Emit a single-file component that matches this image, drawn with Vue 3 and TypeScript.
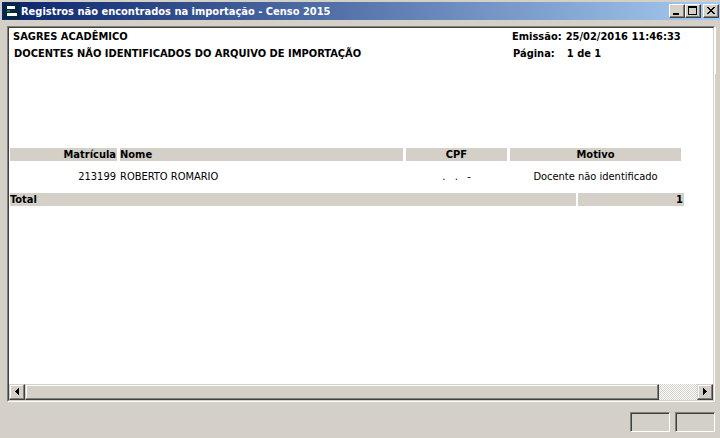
<script setup lang="ts">
interface Teacher {
  id: number
  name: string
  cpf: string
  reason: string
}

const title = 'Registros não encontrados na importação - Censo 2015'
const teachers: Teacher[] = [
  { id: 213199, name: 'ROBERTO ROMARIO', cpf: '.   .   -', reason: 'Docente não identificado' },
]
</script>

<template>
  <div class="window">
    <header class="titlebar">
      <svg class="logo" viewBox="0 0 16 16" shape-rendering="crispEdges" aria-hidden="true">
        <rect width="16" height="16" fill="#06273f" />
        <path d="M3 3h8v3H3zM3 10h10v3H3z" fill="#fff" />
        <path d="M3 7h3v2H3z" fill="#188a1c" />
      </svg>
      <h1 class="title">{{ title }}</h1>
      <div class="controls">
        <button type="button" class="raised control" aria-label="Minimizar">
          <svg viewBox="0 0 12 10" shape-rendering="crispEdges"><path d="M2 7h6v2H2z" /></svg>
        </button>
        <button type="button" class="raised control" aria-label="Maximizar">
          <svg viewBox="0 0 12 10" shape-rendering="crispEdges">
            <path fill-rule="evenodd" d="M1 0h9v9H1zM2 2v6h7V2z" />
          </svg>
        </button>
        <button type="button" class="raised control close" aria-label="Fechar">
          <svg viewBox="0 0 12 10" shape-rendering="crispEdges">
            <path d="M2 1h2v1h1v1h2V2h1V1h2v1H9v1H8v1H7v1h1v1h1v1h1v1H8V7H7V6H5v1H4v1H2V7h1V6h1V5h1V4H4V3H3V2H2z" />
          </svg>
        </button>
      </div>
    </header>

    <main class="frame">
      <section class="report">
        <div class="heading">
          <div class="names">
            <p class="system">SAGRES ACADÊMICO</p>
            <h2 class="subject">DOCENTES NÃO IDENTIFICADOS DO ARQUIVO DE IMPORTAÇÃO</h2>
          </div>
          <dl class="meta">
            <div><dt>Emissão:</dt><dd>25/02/2016 11:46:33</dd></div>
            <div class="page"><dt>Página:</dt><dd>1 de 1</dd></div>
          </dl>
        </div>

        <table class="grid">
          <thead>
            <tr>
              <th class="end">Matrícula</th>
              <th class="start">Nome</th>
              <th>CPF</th>
              <th>Motivo</th>
            </tr>
          </thead>
          <tbody>
            <tr v-for="t in teachers" :key="t.id">
              <td class="end">{{ t.id }}</td>
              <td>{{ t.name }}</td>
              <td class="center cpf">{{ t.cpf }}</td>
              <td class="center">{{ t.reason }}</td>
            </tr>
          </tbody>
          <tfoot>
            <tr>
              <th class="start">Total</th>
              <td class="end">{{ teachers.length }}</td>
            </tr>
          </tfoot>
        </table>
      </section>

      <div class="scrollbar">
        <button type="button" class="raised arrow" aria-label="Rolar para a esquerda">
          <svg viewBox="0 0 12 12" shape-rendering="crispEdges"><path d="M4 5h1V4h1V3h1V2h1v7H7V8H6V7H5V6H4z" /></svg>
        </button>
        <div class="raised thumb"></div>
        <div class="track"></div>
        <button type="button" class="raised arrow" aria-label="Rolar para a direita">
          <svg viewBox="0 0 12 12" shape-rendering="crispEdges"><path d="M4 2h1v1h1v1h1v1h1v1H7v1H6v1H5v1H4z" /></svg>
        </button>
      </div>
    </main>

    <footer class="status">
      <div class="panel"></div>
      <div class="panel"></div>
    </footer>
  </div>
</template>

<style>
body {
  background: #d4d0c8;
}
</style>

<style scoped>
* {
  box-sizing: border-box;
}

.window {
  display: flex;
  flex-direction: column;
  min-height: 100vh;
  padding: 2px 0 6px 2px;
  background: #d4d0c8;
  color: #000;
  font-family: "DejaVu Sans Condensed", "DejaVu Sans", sans-serif;
  font-size: 11px;
  line-height: 13px;
}

h1,
h2,
p,
dl,
dd {
  margin: 0;
  font-size: 11px;
}

.titlebar {
  display: flex;
  align-items: center;
  height: 18px;
  padding: 0 1px 0 2px;
  background: linear-gradient(90deg, #0a246a, #a6caf0);
}

.logo {
  width: 16px;
  height: 16px;
}

.title {
  flex: 1;
  padding-left: 1px;
  color: #fff;
  font-weight: bold;
  white-space: nowrap;
}

.controls {
  display: flex;
}

.raised {
  padding: 0;
  border: 1px solid;
  border-color: #fff #404040 #404040 #fff;
  background: #d4d0c8;
  box-shadow: inset -1px -1px #808080;
}

.control {
  display: grid;
  place-items: center;
  width: 16px;
  height: 14px;
}

.control svg {
  width: 12px;
  height: 10px;
}

.close {
  margin-left: 2px;
}

.frame {
  position: relative;
  display: flex;
  flex: 1;
  flex-direction: column;
  margin: 6px 5px 0;
  border: 1px solid;
  border-color: #808080 #fff #fff #808080;
  background: #fff;
}

/* Highlight along the upper part of the right edge */
.frame::after {
  content: "";
  position: absolute;
  top: 0;
  right: -2px;
  width: 1px;
  height: 47px;
  background: #fff;
}

.report {
  flex: 1;
  padding: 2px 1px 0;
  border: solid #404040;
  border-width: 1px 0 0 1px;
  border-right: 1px solid #d4d0c8;
}

.heading {
  display: flex;
  justify-content: space-between;
  min-height: 118px;
  padding: 0 26px 0 3px;
  font-weight: bold;
  white-space: nowrap;
}

.names,
.meta {
  display: flex;
  flex-direction: column;
  gap: 4px;
}

.subject {
  padding-left: 1px;
}

.meta {
  width: 174px;
}

.meta div {
  display: flex;
  gap: 4px;
}

.meta .page {
  gap: 12px;
  padding-left: 1px;
}

.grid {
  display: block;
  width: 674px;
}

thead,
tbody,
tfoot {
  display: block;
}

tr {
  display: grid;
  grid-template-columns: 107px 283px 101px 171px;
  gap: 3px;
}

tbody tr {
  padding: 9px 0 10px;
}

tfoot tr {
  grid-template-columns: 1fr 106px;
  gap: 2px;
  font-weight: bold;
}

th,
td {
  padding: 0;
}

thead th,
tfoot th,
tfoot td {
  background: #d4d0c8;
}

.start {
  text-align: left;
}

.end {
  padding-right: 1px;
  text-align: right;
}

.center {
  text-align: center;
}

.cpf {
  white-space: pre;
}

.scrollbar {
  display: flex;
  height: 17px;
  border: solid #d4d0c8;
  border-width: 0 1px 1px 0;
  border-left: 1px solid #404040;
}

.scrollbar .raised {
  border-color: #d4d0c8 #404040 #404040 #d4d0c8;
  box-shadow: inset -1px -1px #808080, inset 1px 1px #fff;
}

.arrow {
  display: grid;
  flex: none;
  place-items: center;
  width: 16px;
  height: 16px;
}

.arrow svg {
  width: 12px;
  height: 12px;
}

.thumb {
  flex: 634;
}

.track {
  flex: 38;
  background: repeating-conic-gradient(#d4d0c8 0 25%, #fff 0 50%) 0 0 / 2px 2px;
}

.status {
  display: flex;
  justify-content: flex-end;
  gap: 5px;
  padding: 10px 5px 0 0;
}

.panel {
  width: 40px;
  height: 20px;
  border: 1px solid;
  border-color: #808080 #fff #fff #808080;
  box-shadow: inset 1px 1px #404040;
}
</style>
